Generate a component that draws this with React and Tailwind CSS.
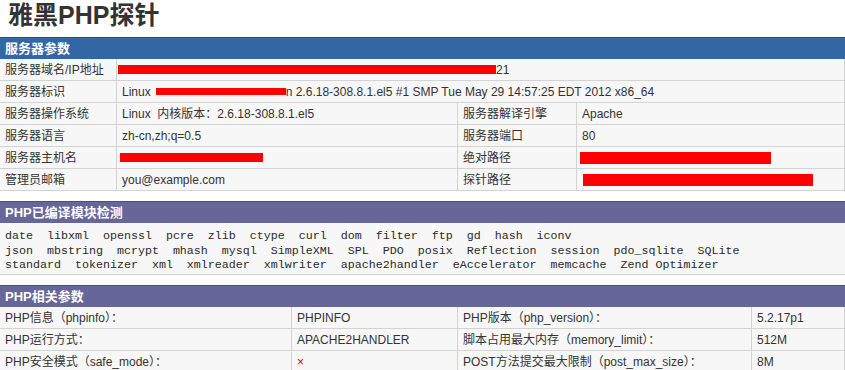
const line = "border-b border-r border-[#d3d3d3] h-[22px] px-[5px] flex items-center whitespace-nowrap overflow-hidden";

function Bar({ w, h = 9, ml = 0 }) {
  return <span className="inline-block bg-[#ff0000] shrink-0" style={{ width: w, height: h, marginLeft: ml }} />;
}

function Head({ color, children }) {
  return (
    <div className={`${color} h-[22px] px-[5px] flex items-center text-white font-bold text-[13px] border-t`}>
      {children}
    </div>
  );
}

const modules = [
  "date  libxml  openssl  pcre  zlib  ctype  curl  dom  filter  ftp  gd  hash  iconv",
  "json  mbstring  mcrypt  mhash  mysql  SimpleXML  SPL  PDO  posix  Reflection  session  pdo_sqlite  SQLite",
  "standard  tokenizer  xml  xmlreader  xmlwriter  apache2handler  eAccelerator  memcache  Zend Optimizer",
];

export default function App() {
  return (
    <div className="bg-white text-[#333] text-[12px] font-['Liberation_Sans','Noto_Sans_CJK_SC',sans-serif] min-h-screen">
      <h1 className="h-[37px] pl-[8px] leading-[30px] text-[25px] font-bold text-[#333]">
        雅黑PHP探针
      </h1>

      <Head color="bg-[#3366a4] border-[#2e4f7e]">服务器参数</Head>
      <div className="grid grid-cols-[117px_341px_119px_1fr] bg-[#f7f7f7] mb-[10px]">
        <div className={line}>服务器域名/IP地址</div>
        <div className={`${line} col-span-3 pl-[1px]`}>
          <Bar w={378} />
          <span>21</span>
        </div>

        <div className={line}>服务器标识</div>
        <div className={`${line} col-span-3`}>
          <span>Linux</span>
          <Bar w={130} h={7} ml={5} />
          <span>n 2.6.18-308.8.1.el5 #1 SMP Tue May 29 14:57:25 EDT 2012 x86_64</span>
        </div>

        <div className={line}>服务器操作系统</div>
        <div className={line}>Linux&nbsp;&nbsp;内核版本：2.6.18-308.8.1.el5</div>
        <div className={line}>服务器解译引擎</div>
        <div className={line}>Apache</div>

        <div className={line}>服务器语言</div>
        <div className={line}>zh-cn,zh;q=0.5</div>
        <div className={line}>服务器端口</div>
        <div className={line}>80</div>

        <div className={line}>服务器主机名</div>
        <div className={`${line} pl-[3px]`}>
          <Bar w={143} />
        </div>
        <div className={line}>绝对路径</div>
        <div className={`${line} pl-[3px]`}>
          <Bar w={191} h={12} />
        </div>

        <div className={line}>管理员邮箱</div>
        <div className={line}>you@example.com</div>
        <div className={line}>探针路径</div>
        <div className={`${line} pl-[6px]`}>
          <Bar w={230} h={12} />
        </div>
      </div>

      <Head color="bg-[#666699] border-[#4d4d80]">PHP已编译模块检测</Head>
      <div className="bg-[#f7f7f7] border-b border-[#d3d3d3] px-[5px] pt-[6px] pb-[1px] mb-[10px] font-['Liberation_Mono',monospace] text-[11.66px] leading-[14.7px] text-[#2a2a2a]">
        {modules.map((m) => (
          <div key={m} className="whitespace-pre overflow-hidden">
            {m}
          </div>
        ))}
      </div>

      <Head color="bg-[#666699] border-[#4d4d80]">PHP相关参数</Head>
      <div className="grid grid-cols-[292px_166px_294px_1fr] bg-[#f7f7f7]">
        <div className={line}>PHP信息（phpinfo）：</div>
        <div className={line}>PHPINFO</div>
        <div className={line}>PHP版本（php_version）：</div>
        <div className={line}>5.2.17p1</div>

        <div className={line}>PHP运行方式：</div>
        <div className={line}>APACHE2HANDLER</div>
        <div className={line}>脚本占用最大内存（memory_limit）：</div>
        <div className={line}>512M</div>

        <div className={line}>PHP安全模式（safe_mode）：</div>
        <div className={`${line} text-[#dd0000]`}>×</div>
        <div className={line}>POST方法提交最大限制（post_max_size）：</div>
        <div className={line}>8M</div>
      </div>
    </div>
  );
}
